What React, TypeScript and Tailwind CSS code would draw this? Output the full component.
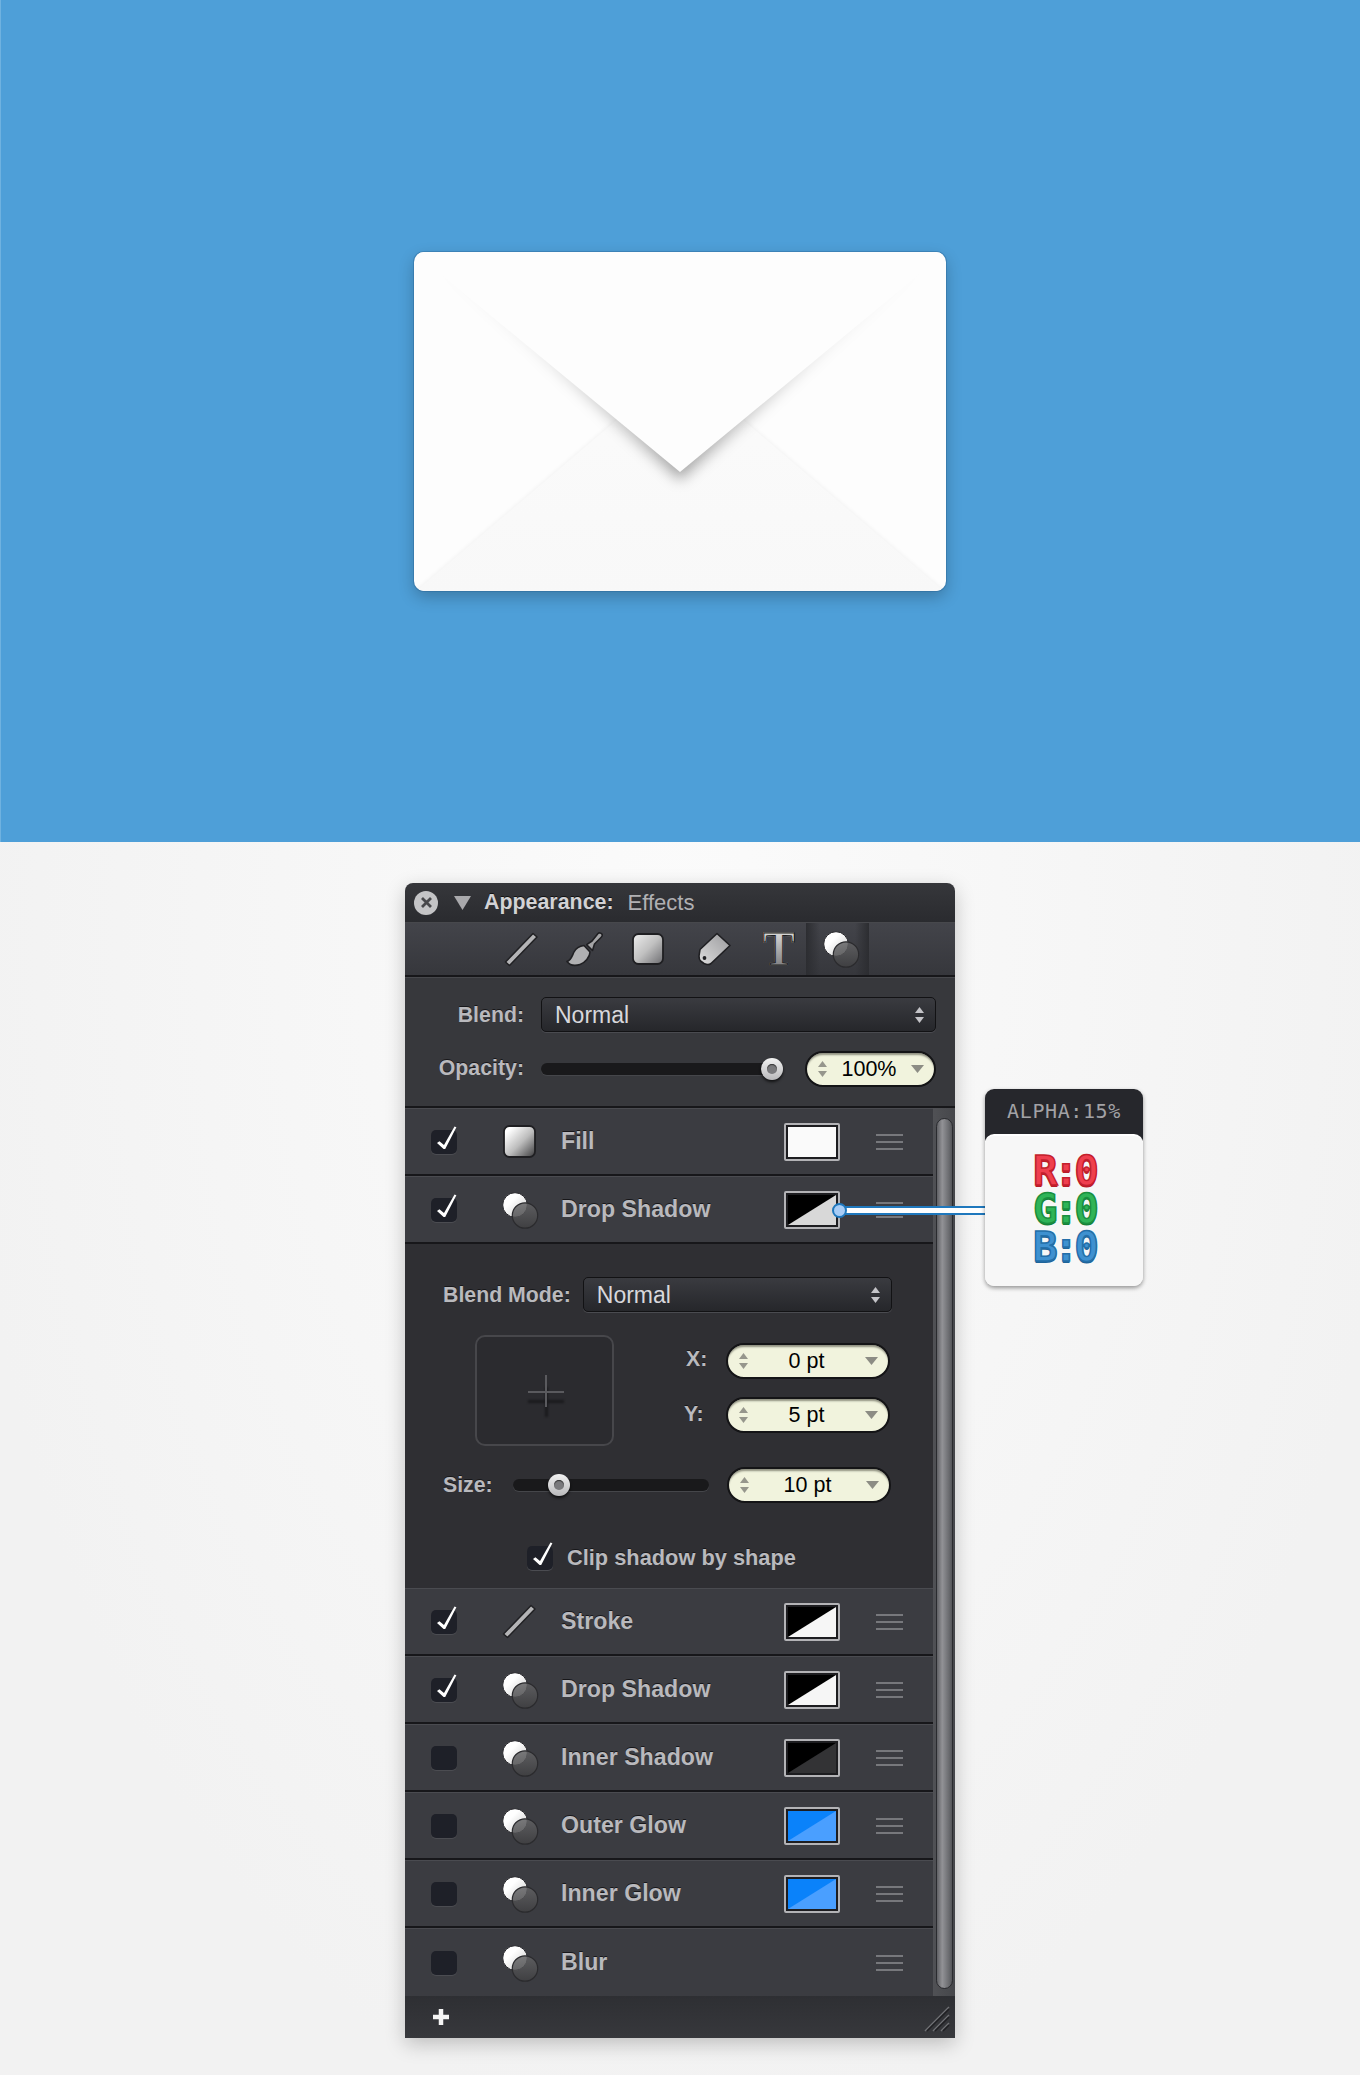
import React from 'react';

type Effect = { name: string; icon: 'circles' | 'line' | 'square'; checked: boolean; swatch?: string; last?: boolean; };

const GradDefs = () => (
  <defs>
    <linearGradient id="metal" x1="0" y1="0" x2="1" y2="1">
      <stop offset="0" stopColor="#eeeeee" />
      <stop offset="0.5" stopColor="#c0c0c0" />
      <stop offset="1" stopColor="#6c6c70" />
    </linearGradient>
    <linearGradient id="fillMetal" x1="0" y1="0" x2="1" y2="1">
      <stop offset="0.15" stopColor="#ffffff" />
      <stop offset="0.55" stopColor="#bcbcbc" />
      <stop offset="1" stopColor="#3a3a3c" />
    </linearGradient>
    <linearGradient id="tagMetal" x1="1" y1="0" x2="0" y2="1">
      <stop offset="0" stopColor="#9a9a9d" />
      <stop offset="1" stopColor="#dcdcdc" />
    </linearGradient>
    <linearGradient id="circleWhite" x1="0" y1="0" x2="1" y2="1">
      <stop offset="0.35" stopColor="#ffffff" />
      <stop offset="0.9" stopColor="#d0d0d0" />
    </linearGradient>
    <linearGradient id="circleDark" x1="0" y1="0" x2="0" y2="1">
      <stop offset="0" stopColor="#646466" />
      <stop offset="1" stopColor="#404042" />
    </linearGradient>
  </defs>
);

const CirclesIcon = () => (
  <svg width="37" height="38" viewBox="0 0 37 38" className="shrink-0">
    <GradDefs />
    <circle cx="13" cy="14" r="12.3" fill="url(#circleWhite)" stroke="#26262a" strokeWidth="1" />
    <circle cx="23" cy="24.5" r="12.7" fill="url(#circleDark)" fillOpacity="0.84" stroke="#2b2b2e" strokeWidth="1.2" />
  </svg>
);

const LineIcon = () => (
  <svg width="34" height="35" viewBox="0 0 34 35" className="shrink-0">
    <polygon points="1.5,30 29,1.5 33,5 5.5,33.5" fill="#b4b4b6" stroke="#202023" strokeWidth="1.5" strokeLinejoin="round" />
  </svg>
);

const BrushIcon = () => (
  <svg width="37" height="35" viewBox="0 0 37 35" className="shrink-0">
    <path d="M20.7 12.7 L26 9 L32 1.5 C33 0.5 35 0.8 36 2.2 C36.8 3.5 36 4.5 35 5.5 L28.5 12 L26.5 18.5 Z" fill="#a4a4a6" stroke="#202023" strokeWidth="1.6" strokeLinejoin="round" />
    <path d="M1 29.5 C5 28.5 6 24 8 20 C10 16 14 14 18 13.5 L24 20 C24 25 19 31 14 32.5 C9 34 4 33.5 1 29.5 Z" fill="#b0b0b2" stroke="#202023" strokeWidth="1.6" strokeLinejoin="round" />
  </svg>
);

const SquareIcon = ({ w = 33, h = 33, fill = 'fillMetal' }: { w?: number; h?: number; fill?: string }) => (
  <svg width={w} height={h} viewBox={`0 0 ${w} ${h}`} className="shrink-0">
    <GradDefs />
    <rect x="1" y="1" width={w - 2} height={h - 2} rx="5.5" fill={`url(#${fill})`} stroke="#1f1f22" strokeWidth="1.8" />
  </svg>
);

const TagIcon = () => (
  <svg width="33" height="34" viewBox="0 0 33 34" className="shrink-0">
    <GradDefs />
    <path d="M19 1.5 L32 13.5 L13 31.5 C11 33 8 32.5 6 31.5 L2.5 29 C1 27.5 1 26 1 24 L2 17.5 Z" fill="url(#tagMetal)" stroke="#1f1f22" strokeWidth="1.6" strokeLinejoin="round" />
    <circle cx="6.5" cy="26" r="1.9" fill="#1f1f22" />
  </svg>
);

const Check = () => (
  <svg width="26" height="30" viewBox="0 0 26 30" className="absolute left-0 -top-[6px]">
    <polygon points="6,19 8.4,17.2 13,21 23.5,2.6 25.4,3.2 14.2,25 12.6,25" fill="#ffffff" />
  </svg>
);

const Checkbox = ({ checked }: { checked: boolean }) => (
  <div className="relative h-6 w-[26px] shrink-0 rounded-[5px] bg-[#1e2028] shadow-[0_1px_0_#4b4c51]">
    {checked && <Check />}
  </div>
);

const Swatch = ({ kind }: { kind: string }) => {
  const colors: Record<string, [string, string]> = {
    shadow: ['#000000', '#d8d8d8'],
    stroke: ['#000000', '#f6f6f6'],
    inner: ['#000000', '#333335'],
    blue: ['#0a82fa', '#4a9fff'],
  };
  if (kind === 'white') {
    return (
      <div className="h-[38px] w-[56px] shrink-0 rounded-[2px] border-2 border-[#b3b3b6] bg-[#1d1d20] p-[2px]">
        <div className="h-full bg-[#fafafa]" />
      </div>
    );
  }
  const [a, b] = colors[kind];
  return (
    <div className="h-[38px] w-[56px] shrink-0 rounded-[2px] border-2 border-[#b3b3b6] bg-[#1d1d20]">
      <svg width="52" height="34" viewBox="0 0 52 34" className="block">
        <rect x="2" y="2" width="48" height="30" fill={a} />
        <polygon points="50,2 50,32 2,32" fill={b} />
      </svg>
    </div>
  );
};

const Handle = () => (
  <div className="flex w-[27px] shrink-0 flex-col gap-[5px]">
    <div className="h-[2px] bg-[#77787c]" />
    <div className="h-[2px] bg-[#77787c]" />
    <div className="h-[2px] bg-[#77787c]" />
  </div>
);

const Row = ({ effect }: { effect: Effect }) => (
  <div className={`flex h-[68px] items-center border-t border-t-[#4a4b50] bg-[#3b3c41] pl-[26px] pr-[30px] ${effect.last ? 'border-b-0' : 'border-b-[2px] border-b-[#17171a]'}`}>
    <Checkbox checked={effect.checked} />
    <div className="ml-[45px] flex w-[36px] shrink-0 justify-start">
      {effect.icon === 'circles' && <CirclesIcon />}
      {effect.icon === 'line' && <LineIcon />}
      {effect.icon === 'square' && <div className="ml-[1px]"><SquareIcon /></div>}
    </div>
    <span className="ml-[23px] flex-1 text-[23.2px] font-bold text-[#b9b9bd] [text-shadow:0_-1px_0_#17171a]">{effect.name}</span>
    {effect.swatch && <Swatch kind={effect.swatch} />}
    <div className="ml-[36px]"><Handle /></div>
  </div>
);

const UpDown = ({ color }: { color: string }) => (
  <svg width="11" height="20" viewBox="0 0 11 20" className="shrink-0">
    <polygon points="5.5,2 10,8 1,8" fill={color} />
    <polygon points="1,12 10,12 5.5,18" fill={color} />
  </svg>
);

const Select = ({ className }: { className: string }) => (
  <div className={`flex h-[35px] items-center justify-between rounded-[5px] border border-[#121214] bg-gradient-to-b from-[#3a3b40] to-[#26272b] pl-[13px] pr-[10px] shadow-[0_1px_0_#4a4b50] ${className}`}>
    <span className="pt-[2px] text-[23px] text-[#d8d8dc]">Normal</span>
    <UpDown color="#c4c4c8" />
  </div>
);

const Pill = ({ value, className }: { value: string; className: string }) => (
  <div className={`flex h-[36px] items-center rounded-full border-2 border-[#141416] bg-[#f1f3dd] pl-[10px] pr-[9px] shadow-[inset_0_3px_2px_-1px_#8f9080] ${className}`}>
    <UpDown color="#96968c" />
    <span className="flex-1 text-center text-[21.5px] text-black">{value}</span>
    <svg width="15" height="10" viewBox="0 0 15 10" className="shrink-0">
      <polygon points="1,1 14,1 7.5,9" fill="#8c8c84" />
    </svg>
  </div>
);

const Slider = ({ className, knob }: { className: string; knob: string }) => (
  <div className={`relative h-3 rounded-full bg-[#19191b] shadow-[0_1px_0_#45464a] ${className}`}>
    <div className={`absolute -top-[5px] h-[22px] w-[22px] rounded-full bg-gradient-to-b from-[#f2f2f2] to-[#b9b9bb] shadow-[0_2px_3px_rgba(0,0,0,0.7)] ${knob}`}>
      <div className="m-[6px] h-[10px] w-[10px] rounded-full bg-[#7a7a7d] shadow-[inset_0_1px_1px_#333]" />
    </div>
  </div>
);

const Label = ({ children, className = '' }: { children: React.ReactNode; className?: string }) => (
  <span className={`text-[21.3px] font-bold text-[#b9b9bd] [text-shadow:0_-1px_0_#17171a] ${className}`}>{children}</span>
);

const topEffects: Effect[] = [
  { name: 'Fill', icon: 'square', checked: true, swatch: 'white' },
  { name: 'Drop Shadow', icon: 'circles', checked: true, swatch: 'shadow' },
];

const bottomEffects: Effect[] = [
  { name: 'Stroke', icon: 'line', checked: true, swatch: 'stroke' },
  { name: 'Drop Shadow', icon: 'circles', checked: true, swatch: 'stroke' },
  { name: 'Inner Shadow', icon: 'circles', checked: false, swatch: 'inner' },
  { name: 'Outer Glow', icon: 'circles', checked: false, swatch: 'blue' },
  { name: 'Inner Glow', icon: 'circles', checked: false, swatch: 'blue' },
  { name: 'Blur', icon: 'circles', checked: false, last: true },
];

const Envelope = () => (
  <div className="h-[339px] w-[532px] overflow-hidden rounded-[10px] bg-[#fdfdfd] shadow-[0_0_0_1px_rgba(40,100,150,0.4),0_6px_16px_rgba(0,0,0,0.24)]">
    <svg width="532" height="339" viewBox="0 0 532 339" className="block">
      <defs>
        <linearGradient id="envBottom" x1="0" y1="0" x2="0" y2="1">
          <stop offset="0" stopColor="#fbfbfb" />
          <stop offset="1" stopColor="#f8f8f8" />
        </linearGradient>
        <linearGradient id="flapShade" x1="0" y1="0" x2="0" y2="1">
          <stop offset="0" stopColor="#000" stopOpacity="0" />
          <stop offset="0.4" stopColor="#000" stopOpacity="0.07" />
          <stop offset="1" stopColor="#000" stopOpacity="0.36" />
        </linearGradient>
        <filter id="blurLine" x="-20%" y="-20%" width="140%" height="140%">
          <feGaussianBlur stdDeviation="1.5" />
        </filter>
        <filter id="blurFlap" x="-20%" y="-20%" width="140%" height="140%">
          <feGaussianBlur stdDeviation="7" />
        </filter>
      </defs>
      <polygon points="0,339 266,112 532,339" fill="#000" fillOpacity="0.03" filter="url(#blurLine)" />
      <polygon points="0,341 266,114 532,341" fill="url(#envBottom)" />
      <polygon points="14,4 518,4 266,228" fill="url(#flapShade)" filter="url(#blurFlap)" />
      <polygon points="0,0 532,0 266,220" fill="#fdfdfd" />
    </svg>
  </div>
);

export default function App() {
  return (
    <div className="min-h-[2075px] w-[1360px] bg-[radial-gradient(ellipse_at_50%_45%,#fbfbfb_0%,#f2f2f2_75%)] font-['Liberation_Sans',sans-serif]">
      {/* top hero */}
      <div className="flex h-[842px] items-start justify-center border-l border-l-[#6fb2e0] bg-[#4e9fd8] pr-[1px] pt-[252px]">
        <Envelope />
      </div>

      {/* panel */}
      <div className="relative ml-[405px] mt-[41px] w-[550px] rounded-t-[8px] shadow-[0_6px_20px_rgba(0,0,0,0.22)]">
        {/* title */}
        <div className="flex h-[39px] items-center rounded-t-[8px] bg-gradient-to-b from-[#36373b] to-[#2a2b2f] pl-[9px]">
          <div className="flex h-6 w-6 items-center justify-center rounded-full bg-[#c4c4c6]">
            <svg width="13" height="13" viewBox="0 0 13 13"><path d="M2 2 L11 11 M11 2 L2 11" stroke="#48484b" strokeWidth="2.8" /></svg>
          </div>
          <svg width="17" height="14" viewBox="0 0 17 14" className="ml-[16px]"><polygon points="0,0 17,0 8.5,14" fill="#a9a9ac" /></svg>
          <span className="ml-[13px] text-[21.4px] font-bold text-[#d2d2d5] [text-shadow:0_-1px_0_#111]">Appearance:</span>
          <span className="ml-[14px] text-[22px] text-[#b0b0b3]">Effects</span>
        </div>

        {/* tool row */}
        <div className="flex h-[55px] items-center border-b-[2px] border-b-[#17171a] border-t border-t-[#47484c] bg-gradient-to-b from-[#43444a] to-[#36373c] pl-[99px]">
          <LineIcon />
          <div className="ml-[28px]"><BrushIcon /></div>
          <div className="ml-[29px]"><SquareIcon w={32} h={32} fill="metal" /></div>
          <div className="ml-[34px]"><TagIcon /></div>
          <span className="ml-[32px] w-[31px] bg-gradient-to-b from-[#e4e4e4] to-[#77777a] bg-clip-text text-center font-['Liberation_Serif',serif] text-[48px] font-bold leading-[42px] text-transparent [-webkit-text-stroke:1px_#1f1f22]">T</span>
          <div className="ml-[12px] flex h-full w-[63px] items-center justify-center bg-[linear-gradient(to_right,#2c2d31,transparent_22%,transparent_78%,#2c2d31)] pl-[7px]">
            <CirclesIcon />
          </div>
        </div>

        {/* blend + opacity */}
        <div className="border-b-[2px] border-b-[#17171a] border-t border-t-[#47484c] bg-[#37383c] pb-[19px] pr-[19px] pt-[19px]">
          <div className="flex items-center">
            <Label className="w-[119px] pt-[2px] text-right">Blend:</Label>
            <Select className="ml-[17px] flex-1" />
          </div>
          <div className="mt-[19px] flex items-center">
            <Label className="w-[119px] text-right">Opacity:</Label>
            <Slider className="ml-[17px] w-[231px]" knob="right-[-11px]" />
            <Pill value="100%" className="ml-[33px] w-[131px]" />
          </div>
        </div>

        {/* list and scrollbar */}
        <div className="flex">
          <div className="flex-1">
            {topEffects.map((e, i) => <Row key={i} effect={e} />)}

            {/* expanded drop shadow */}
            <div className="bg-[#2f2f33] pb-[18px] pl-[38px] pr-[41px] pt-[33px]">
              <div className="flex items-center">
                <Label className="pt-[2px]">Blend Mode:</Label>
                <Select className="ml-[12px] flex-1" />
              </div>
              <div className="ml-[32px] mt-[23px] flex items-start">
                <div className="relative h-[111px] w-[139px] shrink-0 rounded-[10px] border-2 border-[#47474b] bg-[#2b2b2f]">
                  <div className="absolute left-[51px] top-[63px] h-[3px] w-[36px] bg-[#1a1a1d] blur-[1px]" />
                  <div className="absolute left-[68px] top-[50px] h-[30px] w-[3px] bg-[#1a1a1d] blur-[1px]" />
                  <div className="absolute left-[51px] top-[54px] h-[2px] w-[36px] bg-[#5a5a5e]" />
                  <div className="absolute left-[68px] top-[38px] h-[32px] w-[2px] bg-[#5a5a5e]" />
                </div>
                <div className="ml-[72px] flex flex-1 flex-col gap-[18px] pt-[8px]">
                  <div className="flex h-[36px] items-center">
                    <Label className="w-[40px] pb-[2px]">X:</Label>
                    <Pill value="0 pt" className="w-[164px]" />
                  </div>
                  <div className="flex h-[36px] items-center">
                    <Label className="-ml-[2px] w-[42px]">Y:</Label>
                    <Pill value="5 pt" className="w-[164px]" />
                  </div>
                </div>
              </div>
              <div className="mt-[21px] flex items-center">
                <Label className="w-[70px] pt-[2px]">Size:</Label>
                <Slider className="w-[196px]" knob="left-[35px]" />
                <Pill value="10 pt" className="ml-[18px] w-[164px]" />
              </div>
              <div className="ml-[84px] mt-[43px] flex h-6 items-center">
                <Checkbox checked />
                <Label className="ml-[14px] text-[21.8px]">Clip shadow by shape</Label>
              </div>
            </div>

            {bottomEffects.map((e, i) => <Row key={i} effect={e} />)}
          </div>

          {/* scrollbar */}
          <div className="w-[22px] shrink-0 bg-gradient-to-r from-[#505155] to-[#46474b] pb-[7px] pl-[3px] pr-[2px] pt-[10px]">
            <div className="h-full w-[17px] rounded-full border border-[#2a2b2f] bg-[linear-gradient(to_right,#5f6064,#929296_35%,#6a6b6f_80%,#55565a)]" />
          </div>
        </div>

        {/* footer */}
        <div className="flex h-[42px] items-center justify-between bg-gradient-to-b from-[#2e2f33] to-[#37383c] pl-[28px] pr-[5px]">
          <svg width="16" height="16" viewBox="0 0 16 16"><path d="M8 0 V16 M0 8 H16" stroke="#f4f4f4" strokeWidth="4.5" /></svg>
          <svg width="26" height="26" viewBox="0 0 26 26" className="mt-[4px]">
            <path d="M1 25 L25 1 M9 25 L25 9 M17 25 L25 17" stroke="#6f7074" strokeWidth="1.5" />
            <path d="M3 25 L25 3 M11 25 L25 11 M19 25 L25 19" stroke="#1f1f22" strokeWidth="1.5" />
          </svg>
        </div>

        {/* connector */}
        <div className="absolute left-[435px] top-[323px] h-[9px] w-[145px] border-y-[2px] border-y-[#1f78bd] bg-white" />
        <div className="absolute left-[427px] top-[320px] h-[15px] w-[15px] rounded-full border-[2px] border-[#1f78bd] bg-[#a8cdf6]" />

        {/* colour popover */}
        <div className="absolute left-[580px] top-[206px] w-[158px] rounded-[9px] bg-[#f7f7f7] shadow-[0_2px_4px_rgba(0,0,0,0.4)]">
          <div className="h-[52px] rounded-t-[9px] bg-[#26272c] pt-[9px] text-center font-['DejaVu_Sans_Mono',monospace] text-[20px] leading-[26px] tracking-[0.6px] text-[#a2a2a6]">ALPHA:15%</div>
          <div className="-mt-[7px] flex h-[152px] flex-col items-center rounded-[9px] border-t-2 border-t-white bg-[#f7f7f7] pt-[16px] font-['DejaVu_Sans_Mono',monospace] text-[41px] font-bold leading-[38px] tracking-[-4px]">
            <span className="text-[#ef3f4e] [-webkit-text-stroke:1.5px_#c41f2d] [text-shadow:0_2px_0_#b81c2a]">R:0</span>
            <span className="text-[#2fb457] [-webkit-text-stroke:1.5px_#1b8f3f] [text-shadow:0_2px_0_#15813a]">G:0</span>
            <span className="text-[#3f91d0] [-webkit-text-stroke:1.5px_#246fa9] [text-shadow:0_2px_0_#1f6499]">B:0</span>
          </div>
        </div>
      </div>
    </div>
  );
}
